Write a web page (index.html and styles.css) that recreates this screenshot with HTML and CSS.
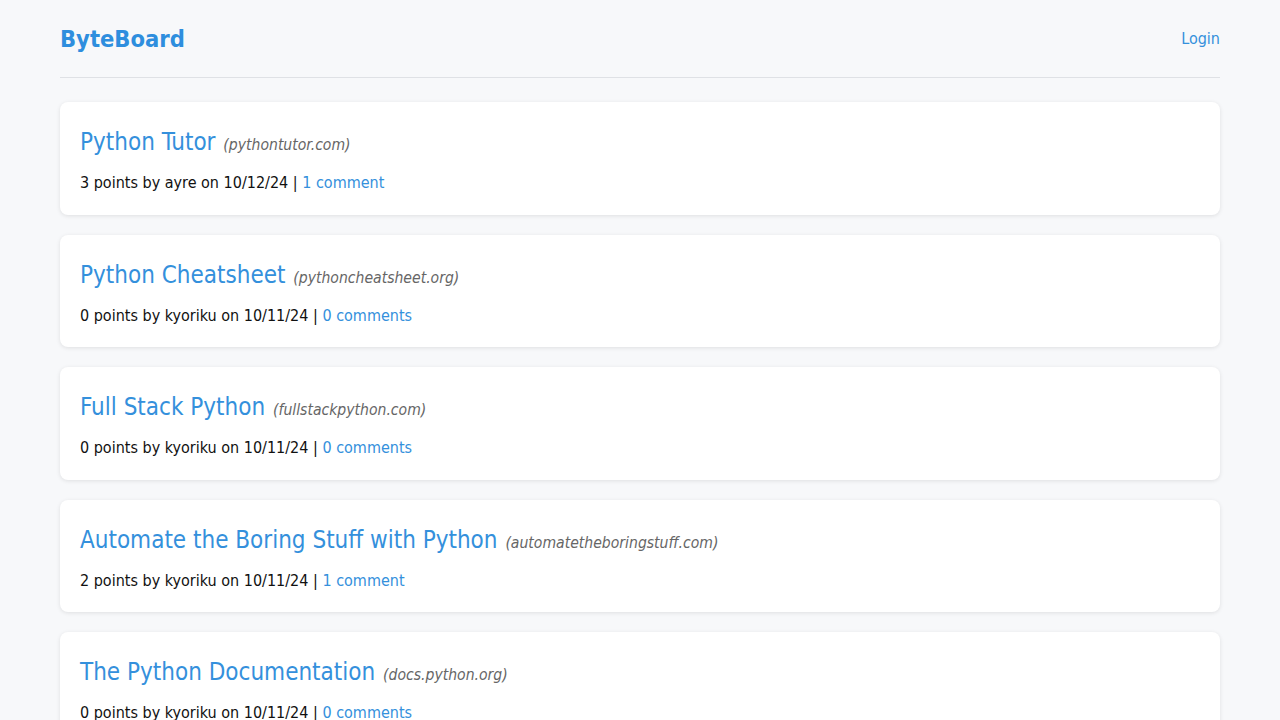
FILE: index.html
```html
<!DOCTYPE html>
<html lang="en">
<head>
<meta charset="utf-8">
<title>ByteBoard</title>
<link rel="stylesheet" href="styles.css">
</head>
<body>
<div class="container">
  <header class="site-header">
    <a class="logo" href="#">ByteBoard</a>
    <a class="login" href="#">Login</a>
  </header>
  <main class="posts">
    <article class="post">
      <h2 class="post-title"><a href="#">Python Tutor</a> <span class="domain">(pythontutor.com)</span></h2>
      <p class="meta">3 points by ayre on 10/12/24 | <a href="#">1 comment</a></p>
    </article>
    <article class="post">
      <h2 class="post-title"><a href="#">Python Cheatsheet</a> <span class="domain">(pythoncheatsheet.org)</span></h2>
      <p class="meta">0 points by kyoriku on 10/11/24 | <a href="#">0 comments</a></p>
    </article>
    <article class="post">
      <h2 class="post-title"><a href="#">Full Stack Python</a> <span class="domain">(fullstackpython.com)</span></h2>
      <p class="meta">0 points by kyoriku on 10/11/24 | <a href="#">0 comments</a></p>
    </article>
    <article class="post">
      <h2 class="post-title"><a href="#">Automate the Boring Stuff with Python</a> <span class="domain">(automatetheboringstuff.com)</span></h2>
      <p class="meta">2 points by kyoriku on 10/11/24 | <a href="#">1 comment</a></p>
    </article>
    <article class="post">
      <h2 class="post-title"><a href="#">The Python Documentation</a> <span class="domain">(docs.python.org)</span></h2>
      <p class="meta">0 points by kyoriku on 10/11/24 | <a href="#">0 comments</a></p>
    </article>
  </main>
</div>
</body>
</html>
```
FILE: styles.css
```css
* { box-sizing: border-box; }
html, body { margin: 0; padding: 0; }
body {
  background: #f7f8fa;
  font-family: "DejaVu Sans Condensed", "DejaVu Sans", sans-serif;
  color: #111;
  font-size: 16px;
  line-height: 1.5;
}
a { color: #3490dc; text-decoration: none; }
.container { max-width: 1160px; margin: 0 auto; }
.site-header {
  display: flex;
  justify-content: space-between;
  align-items: center;
  padding: 20px 0 19px;
  border-bottom: 1px solid #dfe1e5;
}
.logo {
  font-size: 23.5px;
  font-weight: bold;
  line-height: 38px;
  color: #2e8ede;
}
.login { font-size: 16px; }
.posts {
  display: flex;
  flex-direction: column;
  gap: 20px;
  padding-top: 24px;
}
.post {
  background: #fff;
  border-radius: 8px;
  padding: 21px 20px 19.5px;
  box-shadow: 0 1px 4px rgba(0, 0, 0, 0.1);
}
.post-title {
  margin: 0 0 10px;
  font-size: 24px;
  font-weight: normal;
  line-height: 38px;
}
.domain {
  font-size: 15.6px;
  font-style: italic;
  color: #666;
  line-height: 1;
  margin-left: 1px;
}
.meta { margin: 0; line-height: 24px; }
```
